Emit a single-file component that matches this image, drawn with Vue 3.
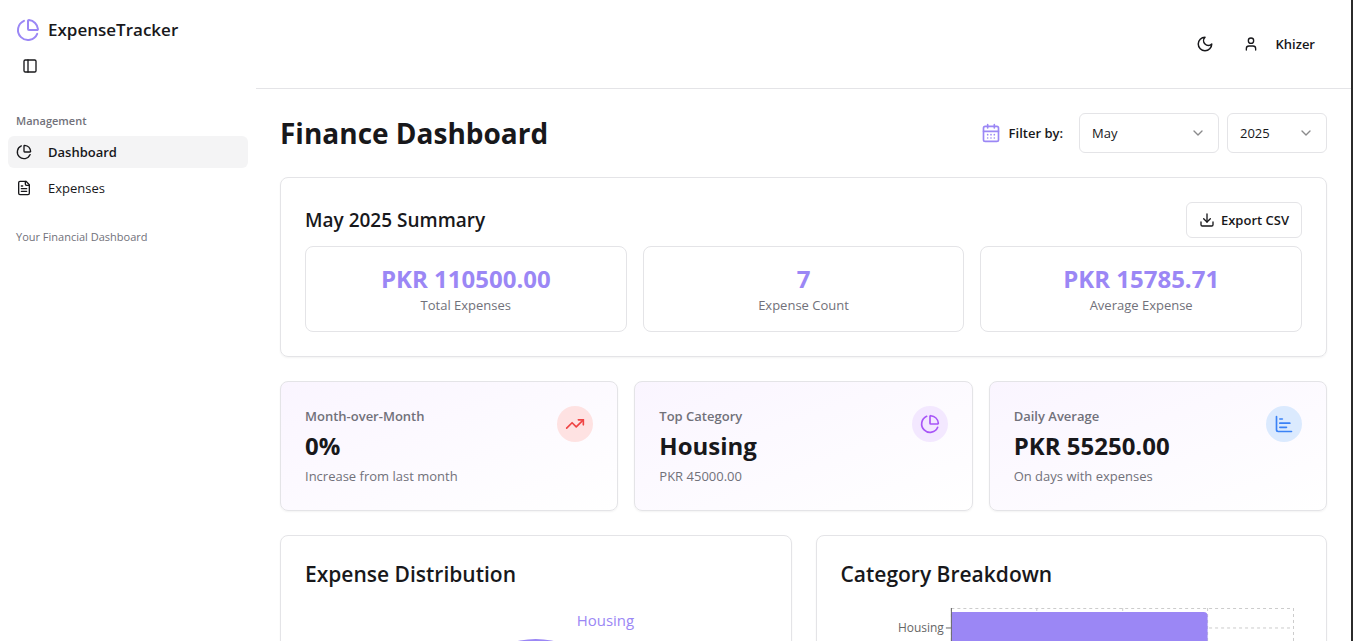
<script setup>
import { ref, computed } from 'vue'

const months = ['January', 'February', 'March', 'April', 'May', 'June', 'July', 'August', 'September', 'October', 'November', 'December']
const years = ['2023', '2024', '2025']
const month = ref('May')
const year = ref('2025')
const heading = computed(() => `${month.value} ${year.value} Summary`)

const totals = [
  { value: 'PKR 110500.00', label: 'Total Expenses' },
  { value: '7', label: 'Expense Count' },
  { value: 'PKR 15785.71', label: 'Average Expense' },
]

const insights = [
  { label: 'Month-over-Month', value: '0%', note: 'Increase from last month', icon: 'trend', tone: 'red' },
  { label: 'Top Category', value: 'Housing', note: 'PKR 45000.00', icon: 'pie', tone: 'purple' },
  { label: 'Daily Average', value: 'PKR 55250.00', note: 'On days with expenses', icon: 'bars', tone: 'blue' },
]

const icons = {
  trend: ['M22 7 13.5 15.5 8.5 10.5 2 17', 'M16 7h6v6'],
  pie: [
    'M21 12c.552 0 1.005-.449.95-.998a10 10 0 0 0-8.953-8.951c-.55-.055-.998.398-.998.95v8a1 1 0 0 0 1 1z',
    'M21.21 15.89A10 10 0 1 1 8 2.83',
  ],
  bars: ['M3 3v16a2 2 0 0 0 2 2h16', 'M7 11h12', 'M7 16h8', 'M7 6h3'],
}
</script>

<template>
  <div class="app">
    <aside class="sidebar">
      <div class="brand">
        <svg class="icon i24 accent" viewBox="0 0 24 24"><path v-for="d in icons.pie" :key="d" :d="d" /></svg>
        <span>ExpenseTracker</span>
      </div>
      <button class="toggle" type="button" aria-label="Toggle sidebar">
        <svg class="icon i16" viewBox="0 0 24 24"><rect x="3" y="3" width="18" height="18" rx="2" /><path d="M9 3v18" /></svg>
      </button>
      <div class="group">Management</div>
      <nav>
        <a href="#dashboard" class="item active">
          <svg class="icon i16" viewBox="0 0 24 24"><path v-for="d in icons.pie" :key="d" :d="d" /></svg>
          Dashboard
        </a>
        <a href="#expenses" class="item">
          <svg class="icon i16" viewBox="0 0 24 24">
            <path d="M15 2H6a2 2 0 0 0-2 2v16a2 2 0 0 0 2 2h12a2 2 0 0 0 2-2V7Z" />
            <path d="M14 2v4a2 2 0 0 0 2 2h4" /><path d="M10 9H8" /><path d="M16 13H8" /><path d="M16 17H8" />
          </svg>
          Expenses
        </a>
      </nav>
      <p class="tagline">Your Financial Dashboard</p>
    </aside>

    <div class="main">
      <header class="topbar">
        <button class="ghost" type="button" aria-label="Toggle theme">
          <svg class="icon i18" viewBox="0 0 24 24"><path d="M12 3a6 6 0 0 0 9 9 9 9 0 1 1-9-9Z" /></svg>
        </button>
        <button class="user" type="button">
          <svg class="icon i16" viewBox="0 0 24 24"><path d="M19 21v-2a4 4 0 0 0-4-4H9a4 4 0 0 0-4 4v2" /><circle cx="12" cy="7" r="4" /></svg>
          Khizer
        </button>
      </header>

      <main class="content">
        <div class="title-row">
          <h1>Finance Dashboard</h1>
          <div class="filters">
            <svg class="icon i20 accent" viewBox="0 0 24 24">
              <path d="M8 2v4M16 2v4" /><rect x="3" y="4" width="18" height="18" rx="2" />
              <path d="M3 10h18M8 14h.01M12 14h.01M16 14h.01M8 18h.01M12 18h.01M16 18h.01" />
            </svg>
            <label class="filter-label" for="month">Filter by:</label>
            <div class="select month">
              <select id="month" v-model="month"><option v-for="m in months" :key="m">{{ m }}</option></select>
              <svg class="icon i16 chevron" viewBox="0 0 24 24"><path d="m6 9 6 6 6-6" /></svg>
            </div>
            <div class="select year">
              <select v-model="year" aria-label="Year"><option v-for="y in years" :key="y">{{ y }}</option></select>
              <svg class="icon i16 chevron" viewBox="0 0 24 24"><path d="m6 9 6 6 6-6" /></svg>
            </div>
          </div>
        </div>

        <section class="card">
          <div class="summary-head">
            <h2>{{ heading }}</h2>
            <button class="export" type="button">
              <svg class="icon i16" viewBox="0 0 24 24"><path d="M21 15v4a2 2 0 0 1-2 2H5a2 2 0 0 1-2-2v-4" /><path d="m7 10 5 5 5-5" /><path d="M12 15V3" /></svg>
              Export CSV
            </button>
          </div>
          <div class="three">
            <div v-for="t in totals" :key="t.label" class="total">
              <div class="total-value">{{ t.value }}</div>
              <div class="note">{{ t.label }}</div>
            </div>
          </div>
        </section>

        <section class="three">
          <article v-for="s in insights" :key="s.label" class="card insight">
            <div>
              <div class="insight-label">{{ s.label }}</div>
              <div class="insight-value">{{ s.value }}</div>
              <div class="note">{{ s.note }}</div>
            </div>
            <span class="badge" :class="s.tone">
              <svg class="icon i20" viewBox="0 0 24 24"><path v-for="d in icons[s.icon]" :key="d" :d="d" /></svg>
            </span>
          </article>
        </section>

        <section class="two">
          <article class="card">
            <h3>Expense Distribution</h3>
            <svg class="chart" viewBox="0 0 462 300">
              <circle cx="231" cy="115" r="80" fill="#9b87f5" />
              <text class="slice" x="272" y="22">Housing</text>
            </svg>
          </article>
          <article class="card">
            <h3>Category Breakdown</h3>
            <svg class="chart" viewBox="0 0 462 300">
              <g class="grid">
                <path d="M110.500 4.500H453M110.500 24H453M110.500 64H453" />
                <path d="M110.500 4V284M196 4V284M282 4V284M367 4V284M453 4V284" />
              </g>
              <path d="M110.500 8H363a4 4 0 0 1 4 4V36a4 4 0 0 1-4 4H110.500Z" fill="#9b87f5" />
              <path class="axis" d="M110.500 4V284M105 24H110" />
              <text class="tick" x="103" y="28">Housing</text>
            </svg>
          </article>
        </section>
      </main>
    </div>
  </div>
</template>

<style>
body {
  margin: 0;
}
</style>

<style scoped>
* {
  box-sizing: border-box;
}
.app {
  display: flex;
  height: 100vh;
  overflow: hidden;
  border-right: 2px solid #2b2b2b;
  background: #fff;
  color: #18181b;
  font: 13px/20px "Open Sans", "Noto Sans", sans-serif;
}
h1, h2, h3, p {
  margin: 0;
}
button, select {
  font: inherit;
  color: inherit;
  background: none;
  border: 0;
  margin: 0;
  padding: 0;
}
.icon {
  fill: none;
  stroke: currentColor;
  stroke-width: 2;
  stroke-linecap: round;
  stroke-linejoin: round;
  flex: none;
  display: block;
}
.i16 { width: 16px; height: 16px; }
.i18 { width: 18px; height: 18px; }
.i20 { width: 20px; height: 20px; }
.i24 { width: 24px; height: 24px; }
.accent { color: #9b87f5; }

.sidebar {
  width: 256px;
  flex: none;
  padding: 16px 8px;
}
.brand {
  display: flex;
  align-items: center;
  gap: 8px;
  padding: 0 8px;
  font-size: 17px;
  line-height: 28px;
  font-weight: 600;
}
.toggle {
  display: flex;
  align-items: center;
  justify-content: center;
  width: 28px;
  height: 28px;
  margin: 8px 8px 24px;
}
.group {
  padding: 8px 8px 6px;
  font-size: 11px;
  line-height: 18px;
  font-weight: 600;
  color: #71717a;
}
nav {
  display: grid;
  gap: 4px;
}
.item {
  display: flex;
  align-items: center;
  gap: 16px;
  height: 32px;
  padding: 0 8px;
  border-radius: 6px;
  color: inherit;
  text-decoration: none;
}
.active {
  background: #f4f4f5;
  font-weight: 600;
}
.tagline {
  padding: 24px 8px;
  font-size: 11px;
  line-height: 18px;
  color: #71717a;
}

.main {
  flex: 1;
  min-width: 0;
}
.topbar {
  display: flex;
  justify-content: flex-end;
  align-items: center;
  gap: 8px;
  padding: 24px;
  border-bottom: 1px solid #e4e4e7;
}
.ghost {
  display: flex;
  align-items: center;
  justify-content: center;
  width: 36px;
  height: 40px;
}
.user {
  display: flex;
  align-items: center;
  gap: 16px;
  height: 40px;
  padding: 0 12px;
  font-weight: 600;
}
.content {
  display: grid;
  gap: 24px;
  padding: 24px;
}
.title-row, .filters, .summary-head {
  display: flex;
  align-items: center;
}
.title-row, .summary-head {
  justify-content: space-between;
}
.filters {
  gap: 8px;
}
.filter-label {
  margin-right: 8px;
  font-weight: 600;
}
h1 {
  font-size: 28px;
  line-height: 36px;
  font-weight: 700;
}
.select {
  position: relative;
}
.month { width: 140px; }
.year { width: 100px; }
select {
  appearance: none;
  width: 100%;
  height: 40px;
  padding: 0 12px;
  border: 1px solid #e4e4e7;
  border-radius: 6px;
  display: block;
}
.chevron {
  position: absolute;
  right: 13px;
  top: 12px;
  opacity: 0.5;
  pointer-events: none;
}
.card {
  min-width: 0;
  padding: 24px;
  border: 1px solid #e4e4e7;
  border-radius: 8px;
  box-shadow: 0 1px 2px rgba(0, 0, 0, 0.05);
}
.summary-head {
  margin-bottom: 8px;
}
h2 {
  font-size: 19px;
  line-height: 28px;
  font-weight: 600;
}
.export {
  display: flex;
  align-items: center;
  gap: 6px;
  height: 36px;
  padding: 0 12px;
  border: 1px solid #e4e4e7;
  border-radius: 6px;
  font-weight: 600;
}
.three {
  display: grid;
  grid-template-columns: repeat(3, minmax(0, 1fr));
  gap: 16px;
}
.total {
  padding: 16px;
  border: 1px solid #e4e4e7;
  border-radius: 8px;
  text-align: center;
}
.total-value {
  font-size: 24px;
  line-height: 32px;
  font-weight: 700;
  color: #9b87f5;
}
.note {
  color: #71717a;
}
.insight {
  display: flex;
  justify-content: space-between;
  align-items: flex-start;
  background: linear-gradient(to bottom right, #faf5ff, #fff);
}
.insight-label {
  font-weight: 600;
  color: #71717a;
}
.insight-value {
  margin: 4px 0;
  font-size: 24px;
  line-height: 32px;
  font-weight: 700;
}
.badge {
  padding: 8px;
  border-radius: 50%;
}
.red { background: #fee2e2; color: #ef4444; }
.purple { background: #f3e8ff; color: #a855f7; }
.blue { background: #dbeafe; color: #3b82f6; }
.two {
  display: grid;
  grid-template-columns: repeat(2, minmax(0, 1fr));
  gap: 24px;
}
h3 {
  font-size: 21px;
  line-height: 28px;
  font-weight: 600;
}
.chart {
  display: block;
  width: 100%;
  margin-top: 16px;
}
.slice {
  font-size: 15px;
  fill: #9b87f5;
}
.grid {
  fill: none;
  stroke: #ccc;
  stroke-dasharray: 3 3;
}
.axis {
  fill: none;
  stroke: #666;
}
.tick {
  font-size: 12px;
  fill: #666;
  text-anchor: end;
}
</style>
